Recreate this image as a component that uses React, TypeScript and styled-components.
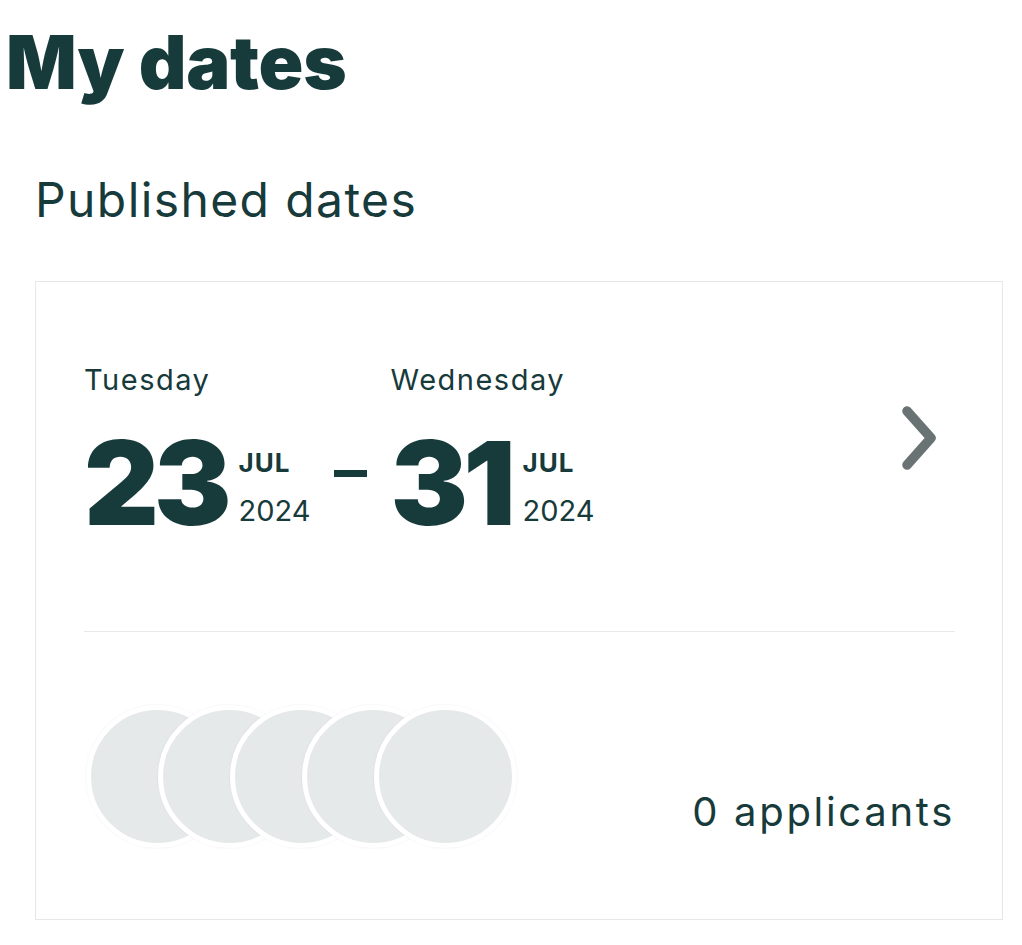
import styled, { createGlobalStyle } from 'styled-components';

const ink = '#173a3b';

const GlobalStyle = createGlobalStyle`
  html, body {
    margin: 0;
    padding: 0;
    background: #ffffff;
  }
  body {
    font-family: Inter, 'Noto Sans', 'Liberation Sans', sans-serif;
    color: ${ink};
  }
`;

const Page = styled.main`
  padding: 17px 19px 24px 35px;
`;

const Title = styled.h1`
  margin: 0 0 0 -29px;
  font-size: 74px;
  line-height: 90px;
  font-weight: 900;
  letter-spacing: -0.3px;
  color: ${ink};
`;

const SectionTitle = styled.h2`
  margin: 61px 0 0 0;
  font-size: 48px;
  line-height: 64px;
  font-weight: 400;
  letter-spacing: 1.4px;
  color: ${ink};
`;

const Card = styled.section`
  margin-top: 49px;
  border: 1px solid #e6e8e8;
  padding: 78px 47px 71px 48px;
`;

const DateRow = styled.div`
  display: flex;
  align-items: flex-start;
  padding-bottom: 98px;
  border-bottom: 1px solid #e8eaea;
`;

const DateBlock = styled.div`
  display: flex;
  flex-direction: column;
`;

const Weekday = styled.div`
  font-size: 29px;
  line-height: 40px;
  font-weight: 400;
  letter-spacing: 1.5px;
`;

const DayLine = styled.div`
  display: flex;
  align-items: center;
  margin-top: 33px;
`;

const DayNumber = styled.div`
  font-size: 116px;
  line-height: 100px;
  font-weight: 900;
  letter-spacing: -5px;
`;

const MonthYear = styled.div`
  display: flex;
  flex-direction: column;
  margin-left: 12px;
  padding-top: 13px;
`;

const Month = styled.span`
  font-size: 26px;
  line-height: 32px;
  font-weight: 700;
  letter-spacing: 1px;
`;

const Year = styled.span`
  margin-top: 10px;
  font-size: 29px;
  line-height: 44px;
  font-weight: 400;
`;

const Dash = styled.div`
  width: 33px;
  height: 7px;
  background: ${ink};
  margin: 110px 24px 0 23px;
`;

const Chevron = styled.div`
  margin-left: auto;
  margin-right: 16px;
  margin-top: 45px;
  display: flex;
  color: #6a7373;
`;

const Footer = styled.div`
  display: flex;
  align-items: flex-end;
  justify-content: space-between;
  padding-top: 73px;
`;

const Avatars = styled.div`
  display: flex;
  padding-left: 2px;
`;

const Avatar = styled.div`
  width: 133px;
  height: 133px;
  border-radius: 50%;
  background: #e6e9ea;
  border: 5px solid #ffffff;
  box-shadow: 0 0 2px rgba(0, 0, 0, 0.08);
  flex: none;
  & + & {
    margin-left: -71px;
  }
`;

const Applicants = styled.div`
  font-size: 40px;
  line-height: 52px;
  font-weight: 400;
  letter-spacing: 2.7px;
  margin: 0 0 10px 0;
`;

function DateColumn({ weekday, day, month, year }: { weekday: string; day: string; month: string; year: string }) {
  return (
    <DateBlock>
      <Weekday>{weekday}</Weekday>
      <DayLine>
        <DayNumber>{day}</DayNumber>
        <MonthYear>
          <Month>{month}</Month>
          <Year>{year}</Year>
        </MonthYear>
      </DayLine>
    </DateBlock>
  );
}

export default function App() {
  return (
    <>
      <GlobalStyle />
      <Page>
        <Title>My dates</Title>
        <SectionTitle>Published dates</SectionTitle>
        <Card>
          <DateRow>
            <DateColumn weekday="Tuesday" day="23" month="JUL" year="2024" />
            <Dash />
            <DateColumn weekday="Wednesday" day="31" month="JUL" year="2024" />
            <Chevron>
              <svg width="40" height="66" viewBox="0 0 40 66" fill="none">
                <path d="M8 6 L32 33 L8 60" stroke="currentColor" strokeWidth="9.5" strokeLinecap="round" strokeLinejoin="round" />
              </svg>
            </Chevron>
          </DateRow>
          <Footer>
            <Avatars>
              {[0, 1, 2, 3, 4].map((i) => (
                <Avatar key={i} />
              ))}
            </Avatars>
            <Applicants>0 applicants</Applicants>
          </Footer>
        </Card>
      </Page>
    </>
  );
}
